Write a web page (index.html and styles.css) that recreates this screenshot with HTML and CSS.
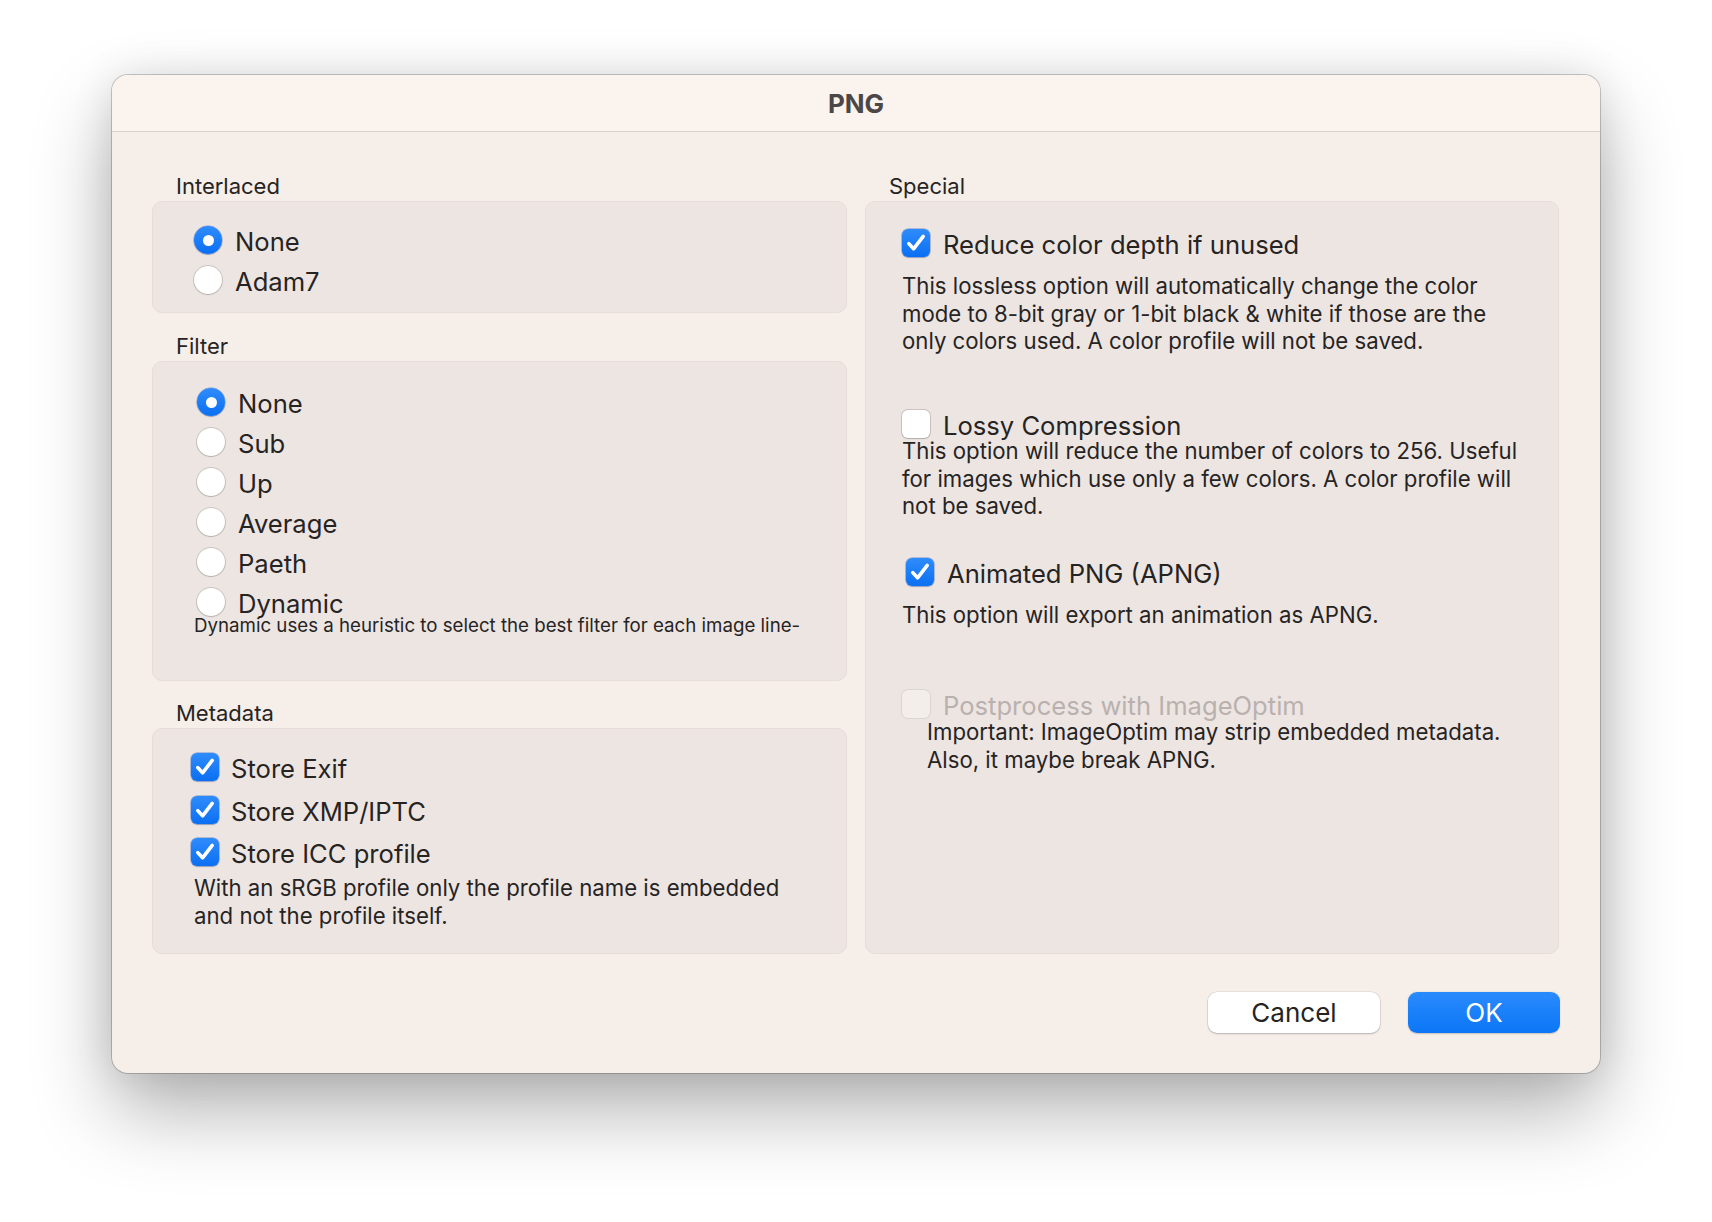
FILE: index.html
```html
<!DOCTYPE html>
<html lang="en">
<head>
<meta charset="utf-8">
<title>PNG</title>
<link rel="stylesheet" href="styles.css">
</head>
<body>
<div class="window">
  <div class="titlebar">PNG</div>
  <div class="content">
    <div class="col">
      <div class="label">Interlaced</div>
      <div class="box box-interlaced">
        <div class="radio-row"><span class="radio on"></span><span class="opt">None</span></div>
        <div class="radio-row"><span class="radio"></span><span class="opt">Adam7</span></div>
      </div>

      <div class="label label-next">Filter</div>
      <div class="box box-filter">
        <div class="radio-list">
          <div class="radio-row"><span class="radio on"></span><span class="opt">None</span></div>
          <div class="radio-row"><span class="radio"></span><span class="opt">Sub</span></div>
          <div class="radio-row"><span class="radio"></span><span class="opt">Up</span></div>
          <div class="radio-row"><span class="radio"></span><span class="opt">Average</span></div>
          <div class="radio-row"><span class="radio"></span><span class="opt">Paeth</span></div>
          <div class="radio-row"><span class="radio"></span><span class="opt">Dynamic</span></div>
        </div>
        <div class="small-note">Dynamic uses a heuristic to select the best filter for each image line-</div>
      </div>

      <div class="label label-meta">Metadata</div>
      <div class="box box-meta">
        <div class="check-row"><span class="check on"><svg viewBox="0 0 28 28"><path d="M6.8 14.6 L11.6 19.8 L21.2 7.4"/></svg></span><span class="opt">Store Exif</span></div>
        <div class="check-row"><span class="check on"><svg viewBox="0 0 28 28"><path d="M6.8 14.6 L11.6 19.8 L21.2 7.4"/></svg></span><span class="opt">Store XMP/IPTC</span></div>
        <div class="check-row"><span class="check on"><svg viewBox="0 0 28 28"><path d="M6.8 14.6 L11.6 19.8 L21.2 7.4"/></svg></span><span class="opt">Store ICC profile</span></div>
        <p class="desc desc-meta">With an sRGB profile only the profile name is embedded<br>and not the profile itself.</p>
      </div>
    </div>

    <div class="col">
      <div class="label">Special</div>
      <div class="box box-special">
        <div class="check-row"><span class="check on"><svg viewBox="0 0 28 28"><path d="M6.8 14.6 L11.6 19.8 L21.2 7.4"/></svg></span><span class="opt">Reduce color depth if unused</span></div>
        <p class="desc desc-reduce">This lossless option will automatically change the color<br>mode to 8-bit gray or 1-bit black &amp; white if those are the<br>only colors used. A color profile will not be saved.</p>

        <div class="check-row row-lossy"><span class="check"></span><span class="opt">Lossy Compression</span></div>
        <p class="desc desc-lossy">This option will reduce the number of colors to 256. Useful<br>for images which use only a few colors. A color profile will<br>not be saved.</p>

        <div class="check-row row-apng"><span class="check on"><svg viewBox="0 0 28 28"><path d="M6.8 14.6 L11.6 19.8 L21.2 7.4"/></svg></span><span class="opt">Animated PNG (APNG)</span></div>
        <p class="desc desc-apng">This option will export an animation as APNG.</p>

        <div class="check-row row-post disabled"><span class="check"></span><span class="opt">Postprocess with ImageOptim</span></div>
        <p class="desc desc-post">Important: ImageOptim may strip embedded metadata.<br>Also, it maybe break APNG.</p>
      </div>
    </div>
  </div>
  <div class="footer">
    <button class="btn btn-cancel">Cancel</button>
    <button class="btn btn-ok">OK</button>
  </div>
</div>
</body>
</html>
```

FILE: styles.css
```css
* { box-sizing: border-box; }

html, body {
  margin: 0;
  padding: 0;
  background: #ffffff;
}

body {
  font-family: Inter, "Noto Sans", "Liberation Sans", sans-serif;
  color: #262423;
  width: 1712px;
  height: 1222px;
  overflow: hidden;
}

.window {
  width: 1488px;
  height: 998px;
  margin: 75px 0 0 112px;
  border-radius: 16px;
  background: #f6eee9;
  overflow: hidden;
  display: flex;
  flex-direction: column;
  box-shadow:
    0 0 0 1px rgba(0, 0, 0, 0.2),
    0 0 40px rgba(0, 0, 0, 0.10),
    0 38px 80px rgba(0, 0, 0, 0.30);
}

.titlebar {
  height: 57px;
  flex: 0 0 57px;
  background: #faf3ee;
  border-bottom: 1px solid #d8d0cb;
  display: flex;
  align-items: center;
  justify-content: center;
  font-size: 26px;
  font-weight: 700;
  color: #4a4746;
}

.content {
  display: grid;
  grid-template-columns: 695px 694px;
  column-gap: 18px;
  padding: 0 41px 0 40px;
}

.col {
  display: flex;
  flex-direction: column;
}

.label {
  font-size: 22px;
  line-height: 26px;
  height: 26px;
  margin: 41px 0 2px 24px;
}

.label-next { margin-top: 20px; }
.label-meta { margin-top: 19px; }

.box {
  background: #ede5e2;
  border: 1px solid #e6dcd8;
  border-radius: 10px;
}

.box-interlaced {
  padding: 18px 0 12px 41px;
}

.box-filter {
  padding: 20px 0 44px 41px;
}

.radio-list {
  margin-left: 3px;
}

.box-meta {
  padding: 16.5px 0 23px 38px;
}

.box-meta .check-row {
  height: 42.5px;
}

.box-special {
  flex: 1;
  padding: 19px 0 0 36px;
}

/* radio buttons */
.radio-row {
  display: flex;
  align-items: flex-start;
  height: 40px;
}

.radio {
  width: 28px;
  height: 28px;
  margin-top: 6px;
  margin-right: 13px;
  border-radius: 50%;
  background: #ffffff;
  box-shadow: 0 0 0 1px rgba(0, 0, 0, 0.14), 0 1px 1.5px rgba(0, 0, 0, 0.12);
  display: flex;
  align-items: center;
  justify-content: center;
  flex: 0 0 28px;
}

.radio.on {
  background: linear-gradient(#2f8cfc, #0a6ff2);
  box-shadow: 0 0 0 0.5px rgba(0, 60, 180, 0.5), 0 1px 1.5px rgba(0, 0, 0, 0.15);
}

.radio.on::after {
  content: "";
  width: 11px;
  height: 11px;
  border-radius: 50%;
  background: #ffffff;
}

.opt {
  font-size: 25.6px;
  line-height: 22px;
  margin-top: 11px;
  white-space: nowrap;
}

/* checkboxes */
.check-row {
  display: flex;
  align-items: flex-start;
  height: 43px;
}

.check-row .opt {
  margin-top: 12.5px;
}

.check {
  width: 28px;
  height: 28px;
  flex: 0 0 28px;
  margin-top: 7.5px;
  margin-right: 13px;
  border-radius: 6px;
  background: #ffffff;
  box-shadow: 0 0 0 1px rgba(0, 0, 0, 0.14), 0 1px 1.5px rgba(0, 0, 0, 0.12);
}

.box-meta .check { margin-right: 12px; }

.check.on {
  background: linear-gradient(#2f8cfc, #0a6ff2);
  box-shadow: 0 0 0 0.5px rgba(0, 60, 180, 0.5), 0 1px 1.5px rgba(0, 0, 0, 0.15);
}

.check svg {
  display: block;
  width: 28px;
  height: 28px;
}

.check svg path {
  fill: none;
  stroke: #ffffff;
  stroke-width: 3.6;
  stroke-linecap: round;
  stroke-linejoin: round;
}

.disabled .check {
  background: #f4eeeb;
  box-shadow: 0 0 0 1px rgba(0, 0, 0, 0.07);
}

.disabled .opt {
  color: #b9b1ae;
}

/* descriptions */
.desc {
  margin: 0;
  font-size: 22.2px;
  line-height: 28px;
  white-space: nowrap;
}

.small-note {
  font-size: 18.7px;
  line-height: 20px;
  margin-top: -5.8px;
  white-space: nowrap;
}

.desc-meta {
  margin: 0.5px 0 0 3px;
}

.desc-reduce {
  margin-top: 8px;
  line-height: 27.5px;
}

.row-lossy { margin-top: 48px; }

.desc-lossy {
  margin-top: -8.5px;
  line-height: 27.5px;
}

.row-apng {
  margin-top: 31px;
  margin-left: 4px;
}

.desc-apng { margin-top: 7.5px; }

.row-post { margin-top: 53px; }

.desc-post {
  margin: -7.5px 0 0 25px;
}

/* footer */
.footer {
  display: flex;
  justify-content: flex-end;
  gap: 28px;
  padding: 38px 40px 0 0;
}

.btn {
  font-family: Inter, "Noto Sans", "Liberation Sans", sans-serif;
  font-size: 26px;
  height: 41px;
  border: none;
  border-radius: 9px;
  padding: 0;
  line-height: 41px;
}

.btn-cancel {
  width: 172px;
  background: #ffffff;
  color: #262423;
  box-shadow: 0 0 0 0.5px rgba(0, 0, 0, 0.12), 0 1px 2px rgba(0, 0, 0, 0.2);
}

.btn-ok {
  width: 152px;
  background: linear-gradient(#2a8bfd, #0b76f6);
  color: #ffffff;
  box-shadow: 0 0.5px 1.5px rgba(0, 0, 0, 0.2);
}
```
